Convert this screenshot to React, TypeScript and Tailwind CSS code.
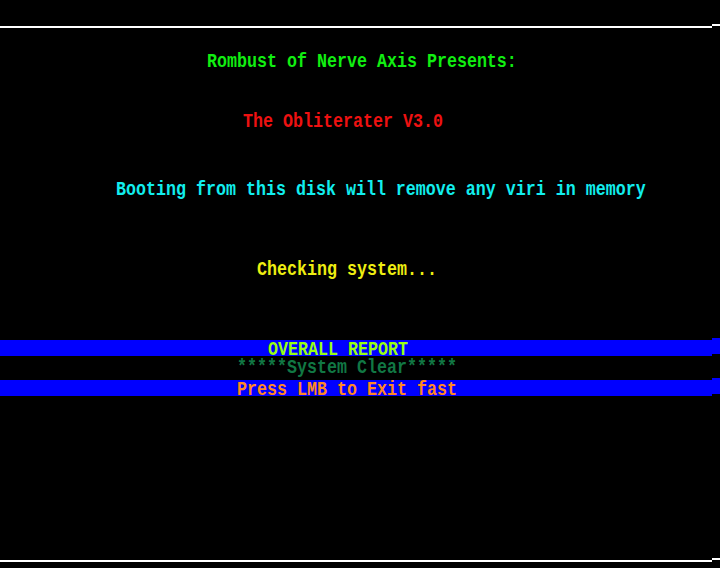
const mono = "font-['Liberation_Mono',monospace] font-bold text-[16.667px] leading-[14px] whitespace-pre";

const Rule = ({ className = "" }: { className?: string }) => (
  <div className={`flex items-start ${className}`}>
    <div className="w-[712px] h-[2px] mt-[2px] bg-white" />
    <div className="flex-1 h-[2px] bg-white" />
  </div>
);

type TextProps = {
  text: string;
  color: string;
  pad: string;
  className?: string;
};

const Line = ({ text, color, pad, className = "" }: TextProps) => (
  <div className={`h-[14px] scale-y-[1.25] ${mono} ${color} ${pad} ${className}`}>
    {text}
  </div>
);

const Bar = ({ text, color, pad, className = "" }: TextProps) => (
  <div className={`flex items-start ${className}`}>
    <div className="w-[712px] h-[16px] mt-[2px] pt-[3px] bg-[#0000ff]">
      <div className={`h-[14px] scale-y-[1.25] ${mono} ${color} ${pad}`}>
        {text}
      </div>
    </div>
    <div className="flex-1 h-[16px] bg-[#0000ff]" />
  </div>
);

export default function App() {
  return (
    <div className="w-[720px] h-[568px] bg-black overflow-hidden pt-[24px]">
      <Rule />
      <Line
        text="Rombust of Nerve Axis Presents:"
        color="text-[#11ee11]"
        pad="pl-[207px]"
        className="mt-[27px]"
      />
      <Line
        text="The Obliterater V3.0"
        color="text-[#ee1111]"
        pad="pl-[243px]"
        className="mt-[46px]"
      />
      <Line
        text="Booting from this disk will remove any viri in memory"
        color="text-[#11eeee]"
        pad="pl-[116px]"
        className="mt-[54px]"
      />
      <Line
        text="Checking system..."
        color="text-[#eeee11]"
        pad="pl-[257px]"
        className="mt-[66px]"
      />
      <Bar
        text="OVERALL REPORT"
        color="text-[#99ff11]"
        pad="pl-[268px]"
        className="mt-[61px]"
      />
      <Line
        text="*****System Clear*****"
        color="text-[#117744]"
        pad="pl-[237px]"
        className="mt-[5px]"
      />
      <Bar
        text="Press LMB to Exit fast"
        color="text-[#ff8822]"
        pad="pl-[237px]"
        className="mt-[3px]"
      />
      <Rule className="mt-[162px]" />
    </div>
  );
}
